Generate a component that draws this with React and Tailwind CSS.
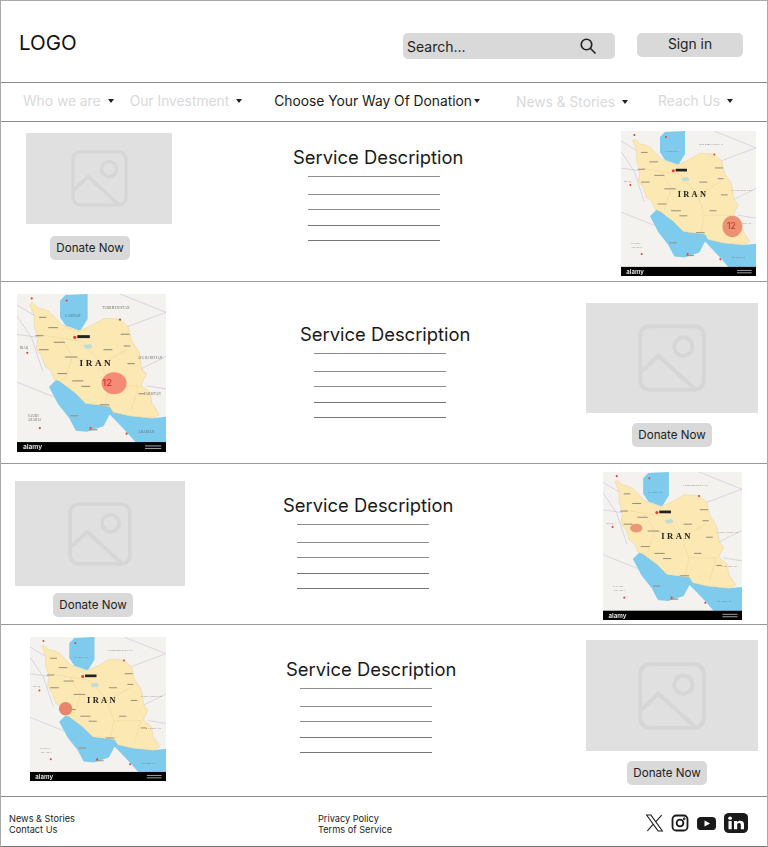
const pageFont = { fontFamily: 'Inter, sans-serif' };

function NavItem({ label, dark, className, caretClass = 'ml-[7px]' }) {
  return (
    <div className={`flex items-center whitespace-nowrap ${className}`}>
      <span className={`text-[13.8px] ${dark ? 'text-[#1a1a1a]' : 'text-[#d9d9d9]'}`}>{label}</span>
      <span className={`inline-block h-0 w-0 border-x-[3.5px] border-t-[4px] border-x-transparent border-t-[#222] ${caretClass}`} />
    </div>
  );
}

function Placeholder({ className, iconClass }) {
  return (
    <div className={`flex items-center justify-center bg-[#e0e0e0] ${className}`}>
      <svg viewBox="0 0 60 60" className={iconClass} fill="none" stroke="#d6d6d6" strokeWidth="3.5">
        <rect x="2" y="2" width="56" height="56" rx="8" />
        <circle cx="40" cy="20" r="8" />
        <path d="M3 42 L18 28 L50 57" />
      </svg>
    </div>
  );
}

function DonateButton({ className }) {
  return (
    <button type="button" className={`block h-6 w-20 rounded-[5px] bg-[#d9d9d9] pt-[1px] text-[11.6px] text-[#222] ${className}`}>
      Donate Now
    </button>
  );
}

// gaps between the rules are uneven in the picture
function Description({ className, linesClass = 'ml-[14px]' }) {
  return (
    <div className={`w-[170px] ${className}`}>
      <h2 className="h-[28px] text-center text-[18.4px] leading-[29px] whitespace-nowrap text-[#1a1a1a]">Service Description</h2>
      <div className={`w-[132px] ${linesClass}`}>
        <div className="mt-[5px] h-px bg-[#8c8c8c]" />
        <div className="mt-[17px] h-px bg-[#8c8c8c]" />
        <div className="mt-[14px] h-px bg-[#8c8c8c]" />
        <div className="mt-[15px] h-px bg-[#777]" />
        <div className="mt-[14px] h-px bg-[#777]" />
      </div>
    </div>
  );
}

const LAND = 'M35 28 L42 24 L57 38 L75 42 L87 48 L107 68 L120 82 L132 88 L167 100 L190 92 L207 83 L237 66 L277 68 L302 88 L312 128 L332 158 L339 203 L352 218 L337 248 L362 268 L367 298 L387 328 L367 338 L330 334 L307 332 L262 322 L252 306 L227 303 L187 298 L157 268 L117 238 L102 233 L92 208 L77 198 L67 168 L52 148 L57 118 L47 88 L47 58 Z';
const CASPIAN = 'M117 18 L132 3 L192 0 L192 68 L172 100 L132 86 L117 63 Z';
const GULF = 'M87 253 L107 233 L117 238 L157 268 L187 298 L227 303 L252 306 L262 322 L307 332 L367 338 L405 334 L405 403 L322 403 L300 378 L267 343 L252 328 L235 360 L190 375 L160 372 L142 338 L112 300 Z';
const BORDERS = 'M60 110 L120 120 L150 170 M150 170 L230 190 L250 250 L330 250 M230 190 L300 150 M120 120 L180 130 M150 170 L130 235 M250 250 L240 300 M330 250 L310 320 M180 130 L230 190';
const MARKS = [
  [60, 62, 20], [85, 90, 26], [50, 112, 22], [100, 130, 30], [60, 150, 26], [130, 170, 34], [110, 215, 26], [150, 235, 30],
  [175, 250, 24], [235, 150, 24], [282, 108, 24], [290, 140, 18], [265, 235, 22], [300, 188, 20], [330, 270, 16], [225, 300, 26],
  [145, 330, 22], [195, 368, 24],
];
const LABELS = [
  ['TURKMENISTAN', 232, 42], ['CASPIAN', 132, 62], ['IRAQ', 8, 150], ['AFGHANISTAN', 328, 178], ['SAUDI', 30, 335], ['ARABIA', 30, 347],
  ['ARABIAN', 330, 378], ['PAKISTAN', 345, 275],
];

function MapImage({ cx, cy, rx, ry, fill, label, labelX, className }) {
  return (
    <svg viewBox="0 0 405 430" preserveAspectRatio="none" className={`block blur-[0.4px] ${className}`}>
      <rect width="405" height="430" fill="#f4f2ee" />
      <path d={GULF} fill="#7ecbee" />
      <path d={CASPIAN} fill="#7ecbee" />
      <path d={LAND} fill="#fce8b2" stroke="#dcc488" strokeWidth="1" />
      <path d={BORDERS} fill="none" stroke="#ecd596" strokeWidth="1.5" />
      <path d="M0 30 L47 58 M0 110 L57 118 M0 240 L100 280 M302 88 L405 50 M339 203 L405 170 M352 250 L405 258 M280 0 L405 50 M0 60 L40 120 L70 210" stroke="#c5b6d4" strokeWidth="1.5" fill="none" />
      <path d="M180 140 L200 136 L206 146 L186 150 Z" fill="#bcdcd8" />
      <g fill="#989080">
        {MARKS.map(([x, y, w]) => (
          <rect key={`${x}-${y}`} x={x} y={y} width={w} height="3" />
        ))}
      </g>
      <g fontFamily="Liberation Serif, serif" fontSize="8" letterSpacing="1" fill="#5d5d5d">
        {LABELS.map(([t, x, y]) => (
          <text key={t} x={x} y={y}>{t}</text>
        ))}
      </g>
      <circle cx="157" cy="118" r="4.5" fill="#e0403a" />
      <rect x="164" y="112" width="34" height="8" fill="#222" />
      <g fill="#e0403a">
        <circle cx="40" cy="12" r="3" />
        <circle cx="135" cy="18" r="3" />
        <circle cx="280" cy="70" r="3" />
        <circle cx="28" cy="160" r="3" />
        <circle cx="62" cy="365" r="3" />
        <circle cx="200" cy="365" r="3" />
        <circle cx="298" cy="380" r="3" />
      </g>
      <text x="170" y="196" fontFamily="Liberation Serif, serif" fontSize="25" fontWeight="700" letterSpacing="7" fill="#222">IRAN</text>
      <ellipse cx={cx} cy={cy} rx={rx} ry={ry} fill={fill} />
      {label ? <text x={labelX} y={cy + 8} fontFamily="Inter, sans-serif" fontSize="26" fontWeight="500" fill="#d8352a">{label}</text> : null}
      <rect y="403" width="405" height="27" fill="#000" />
      <text x="16" y="423" fontFamily="Inter, sans-serif" fontSize="18" fontWeight="700" fill="#ddd">alamy</text>
      <rect x="348" y="412" width="44" height="3" fill="#999" />
      <rect x="348" y="419" width="44" height="3" fill="#999" />
    </svg>
  );
}

function Social() {
  return (
    <div className="ml-auto mr-[19px] mt-[3px] flex items-center">
      <svg viewBox="0 0 24 24" className="h-[20px] w-[19px]" fill="none" stroke="#1a1a1a" strokeWidth="1.3">
        <path d="M2 2 H7.5 L22 22 H16.5 Z M21 2 L13.5 10.5 M3 22 L10.5 13.5" />
      </svg>
      <svg viewBox="0 0 24 24" className="ml-[7px] h-[20px] w-[18px]" fill="none" stroke="#1a1a1a" strokeWidth="2.4">
        <rect x="2" y="2" width="20" height="20" rx="5" />
        <circle cx="12" cy="12" r="4.5" />
        <circle cx="17.6" cy="6.4" r="0.6" fill="#1a1a1a" />
      </svg>
      <svg viewBox="0 0 24 18" className="ml-[8px] h-[13px] w-[19px]" preserveAspectRatio="none">
        <rect width="24" height="18" rx="5" fill="#1a1a1a" />
        <path d="M9.5 5 L16.5 9 L9.5 13 Z" fill="#fff" />
      </svg>
      <svg viewBox="0 0 24 24" className="ml-[8px] h-[20px] w-[24px]" preserveAspectRatio="none">
        <rect width="24" height="24" rx="5" fill="#1a1a1a" />
        <rect x="4.5" y="9.5" width="3.2" height="10" fill="#fff" />
        <circle cx="6.1" cy="6.2" r="1.9" fill="#fff" />
        <path d="M10 9.5 H13 V11 C13.6 10 14.8 9.3 16.2 9.3 C18.8 9.3 20 11 20 13.6 V19.5 H16.8 V14.2 C16.8 13 16.2 12.1 15 12.1 C13.8 12.1 13.2 13 13.2 14.2 V19.5 H10 Z" fill="#fff" />
      </svg>
    </div>
  );
}

export default function App() {
  return (
    <div className="h-[847px] w-[768px] overflow-hidden border-x border-[#aaa] bg-white" style={pageFont}>
      <header className="flex h-[83px] items-start border-y border-[#aaa] border-b-[#8c8c8c]">
        <div className="ml-[18px] mt-[28px] text-[20.5px] leading-[28px] text-[#111]">LOGO</div>
        <div className="ml-auto mt-[32px] flex h-[26px] w-[212px] items-center rounded-[5px] bg-[#d9d9d9] pl-[4px] pr-[18px]">
          <span className="text-[14px] text-[#222]">Search...</span>
          <svg viewBox="0 0 24 24" className="ml-auto h-[18px] w-[18px]" fill="none" stroke="#222" strokeWidth="2.2">
            <circle cx="10" cy="10" r="7" />
            <path d="M15 15 L22 22" />
          </svg>
        </div>
        <button type="button" className="ml-[22px] mr-[24px] mt-[32px] h-6 w-[106px] rounded-[5px] bg-[#d9d9d9] pb-[1px] text-[13.8px] text-[#222]">
          Sign in
        </button>
      </header>

      <nav className="flex h-[39px] items-center border-b border-[#8c8c8c] pb-[2px]">
        <NavItem label="Who we are" className="ml-[22px]" />
        <NavItem label="Our Investment" className="ml-[16px]" />
        <NavItem label="Choose Your Way Of Donation" dark className="ml-[32px]" caretClass="ml-[2px]" />
        <NavItem label="News &amp; Stories" className="ml-[36px] mt-[2px]" />
        <NavItem label="Reach Us" className="ml-[30px]" />
      </nav>

      <section className="flex h-[160px] items-start border-b border-[#999]">
        <div className="ml-[25px] mt-[11px] w-[146px]">
          <Placeholder className="h-[91px] w-[146px]" iconClass="h-[57px] w-[57px]" />
          <DonateButton className="ml-[24px] mt-[12px]" />
        </div>
        <Description className="ml-[121px] mt-[21px]" linesClass="ml-[15px]" />
        <MapImage className="ml-auto mr-[11px] mt-[9px] h-[145px] w-[135px]" cx={334} cy={283} rx={30} ry={32} fill="#ec9274" label="12" labelX={318} />
      </section>

      <section className="flex h-[182px] items-start border-b border-[#999]">
        <MapImage className="ml-[16px] mt-[12px] h-[158px] w-[149px]" cx={264} cy={243} rx={34} ry={30} fill="#f58a76" label="12" labelX={232} />
        <Description className="ml-[134px] mt-[38px]" />
        <div className="ml-auto mr-[9px] mt-[21px] w-[172px]">
          <Placeholder className="h-[110px] w-[172px]" iconClass="h-[68px] w-[68px]" />
          <DonateButton className="ml-[46px] mt-[10px]" />
        </div>
      </section>

      <section className="flex h-[161px] items-start border-b border-[#999]">
        <div className="ml-[14px] mt-[17px] w-[170px]">
          <Placeholder className="h-[105px] w-[170px]" iconClass="h-[64px] w-[64px]" />
          <DonateButton className="ml-[38px] mt-[7px]" />
        </div>
        <Description className="ml-[98px] mt-[27px]" />
        <MapImage className="ml-auto mr-[25px] mt-[8px] h-[148px] w-[139px]" cx={97} cy={163} rx={18} ry={13} fill="#e89a78" />
      </section>

      <section className="flex h-[172px] items-start border-b border-[#8c8c8c]">
        <MapImage className="ml-[29px] mt-[12px] h-[144px] w-[136px]" cx={106} cy={214} rx={20} ry={20} fill="#e8866c" />
        <Description className="ml-[120px] mt-[30px]" />
        <div className="ml-auto mr-[9px] mt-[15px] w-[172px]">
          <Placeholder className="h-[111px] w-[172px]" iconClass="h-[68px] w-[68px]" />
          <DonateButton className="ml-[41px] mt-[10px]" />
        </div>
      </section>

      <footer className="flex h-[50px] items-center border-b border-[#777]">
        <div className="ml-[8px] mt-[4px] w-[309px] text-[9.2px] leading-[11px] text-[#222]">
          <div>News &amp; Stories</div>
          <div>Contact Us</div>
        </div>
        <div className="mt-[4px] text-[9.2px] leading-[11px] text-[#222]">
          <div>Privacy Policy</div>
          <div>Terms of Service</div>
        </div>
        <Social />
      </footer>
    </div>
  );
}
